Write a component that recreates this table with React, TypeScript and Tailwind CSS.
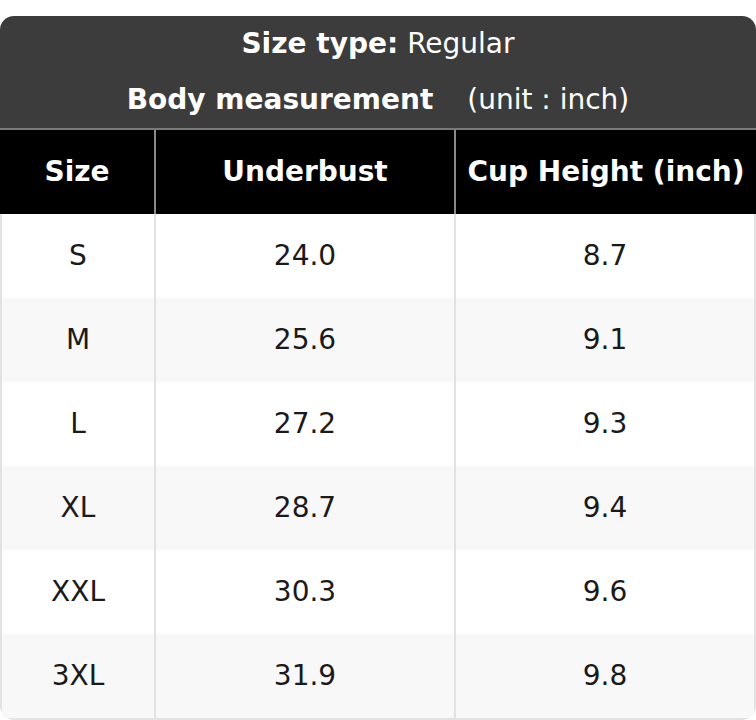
import React from 'react';

const rows = [
  { size: 'S', underbust: '24.0', cup: '8.7' },
  { size: 'M', underbust: '25.6', cup: '9.1' },
  { size: 'L', underbust: '27.2', cup: '9.3' },
  { size: 'XL', underbust: '28.7', cup: '9.4' },
  { size: 'XXL', underbust: '30.3', cup: '9.6' },
  { size: '3XL', underbust: '31.9', cup: '9.8' },
];

const App: React.FC = () => {
  return (
    <div className="w-[756px] h-[720px] bg-white pt-4 font-['DejaVu_Sans',sans-serif] text-[28px]">
      <div className="rounded-[14px] overflow-hidden">
        {/* Title */}
        <div className="bg-[#3c3c3c] text-white text-center">
          <div className="h-[56px] flex items-center justify-center">
            <span className="font-bold">Size type:</span>
            <span className="ml-[9px]">Regular</span>
          </div>
          <div className="h-[56px] flex items-center justify-center">
            <span className="font-bold">Body measurement</span>
            <span className="ml-[34px]">(unit : inch)</span>
          </div>
        </div>

        {/* Column headers */}
        <div className="grid grid-cols-[154px_300px_1fr] h-[86px] bg-black text-white font-bold border-t-2 border-[#7a7a7a]">
          <div className="flex items-center justify-center">Size</div>
          <div className="flex items-center justify-center border-l-2 border-[#8a8a8a]">Underbust</div>
          <div className="flex items-center justify-center border-l-2 border-[#8a8a8a]">Cup Height (inch)</div>
        </div>

        {/* Body */}
        <div className="border-x-2 border-b-2 border-[#e2e2e2] rounded-b-[14px] text-[#1a1a1a]">
          {rows.map((r, i) => (
            <div
              key={r.size}
              className={`grid grid-cols-[152px_300px_1fr] h-[84px] ${i % 2 === 1 ? 'bg-[#f8f8f8]' : 'bg-white'}`}
            >
              <div className="flex items-center justify-center">{r.size}</div>
              <div className="flex items-center justify-center border-l-2 border-[#e2e2e2]">{r.underbust}</div>
              <div className="flex items-center justify-center border-l-2 border-[#e2e2e2]">{r.cup}</div>
            </div>
          ))}
        </div>
      </div>
    </div>
  );
};

export default App;
